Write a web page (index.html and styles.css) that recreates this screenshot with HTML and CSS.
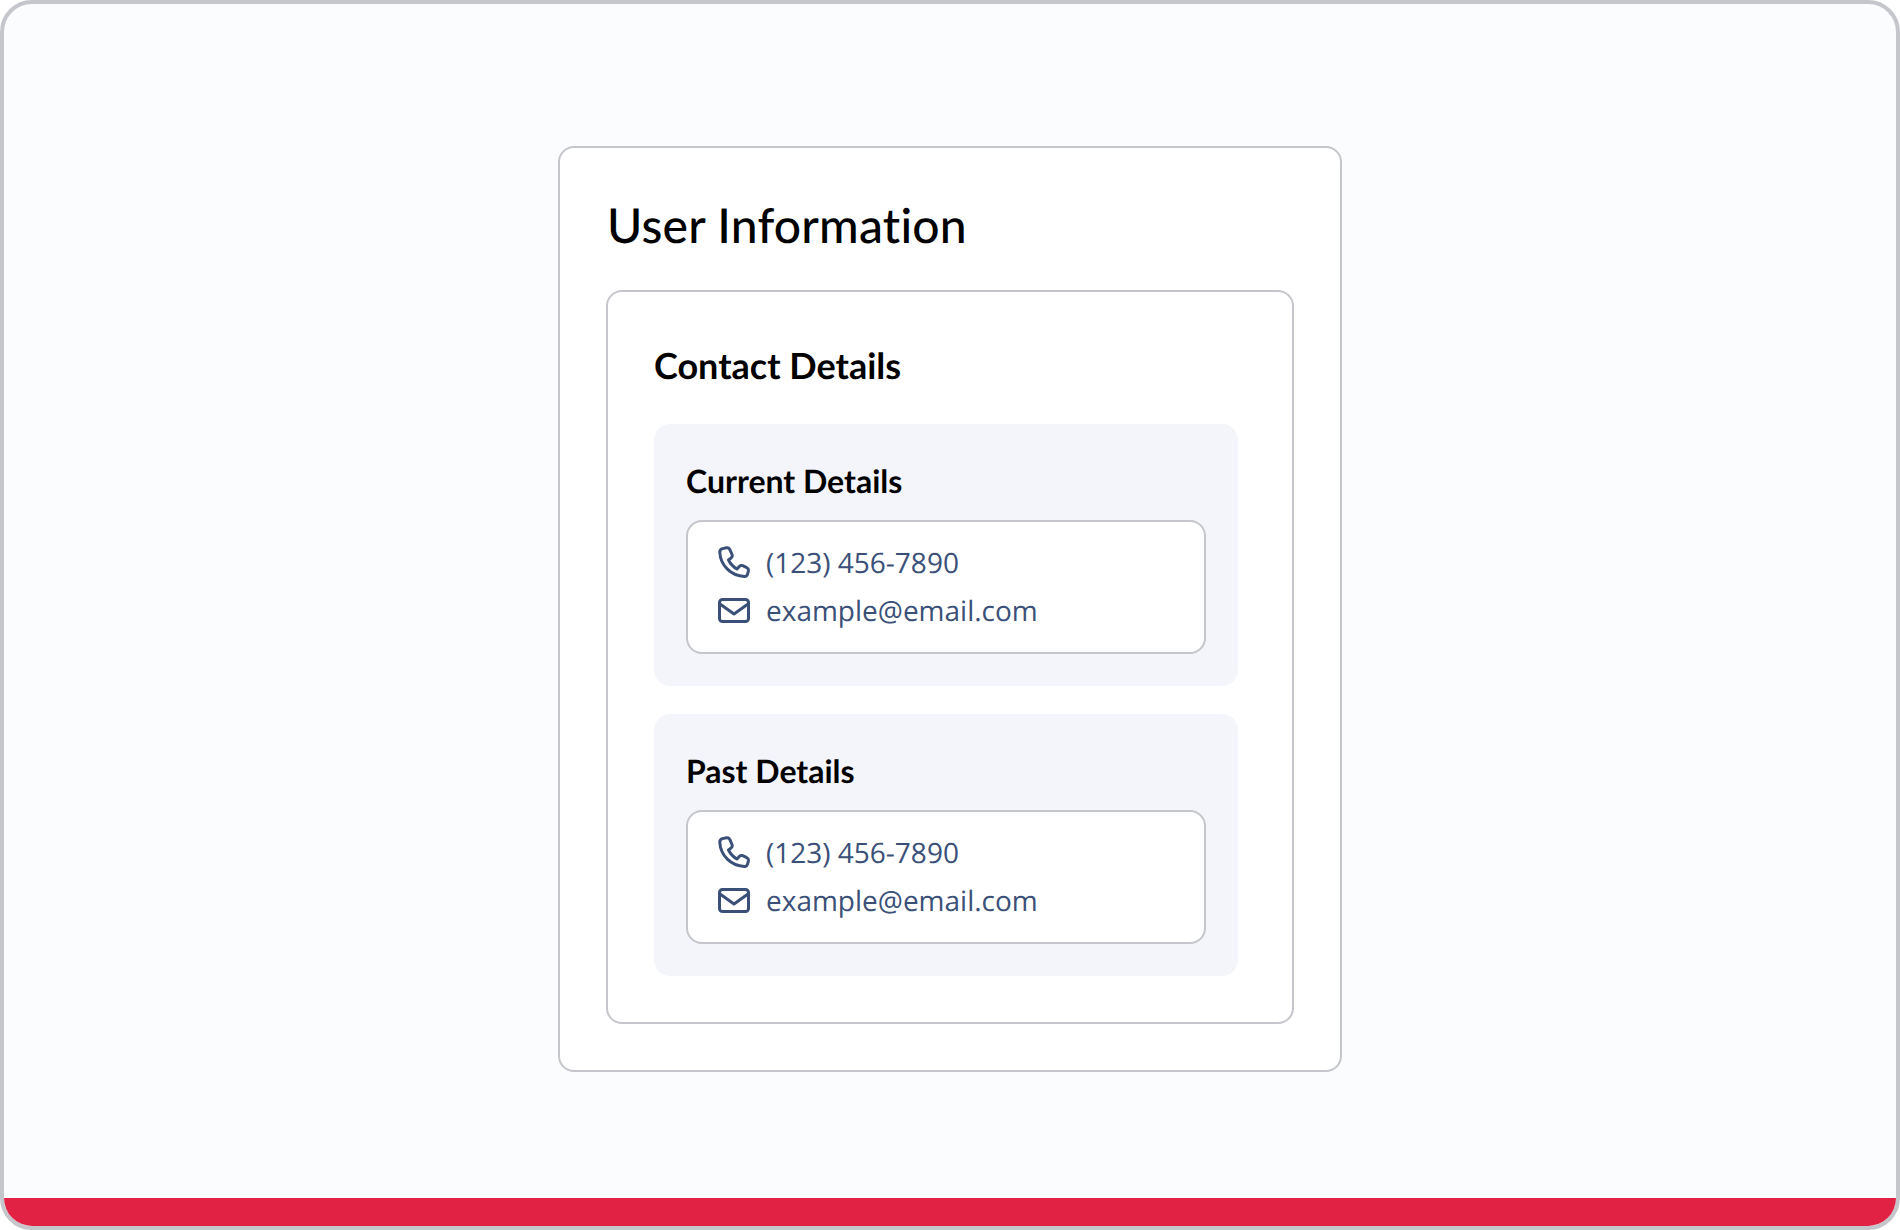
FILE: index.html
```html
<!DOCTYPE html>
<html lang="en">
	<head>
		<meta charset="UTF-8">
		<meta name="viewport" content="width=device-width, initial-scale=1.0">
		<title>User Information</title>
		<link rel="stylesheet" href="styles.css">
	</head>

	<body>
		<div class="frame">
			<main class="content">
				<section class="card">
					<h1>User Information</h1>

					<div class="contact">
						<h2>Contact Details</h2>

						<div class="details">
							<h3>Current Details</h3>
							<div class="info">
								<div class="info-row">
									<svg class="icon" viewBox="0 0 32 32"><path d="M1.800 6.500Q1.600 3.200 4.500 2.600L8.500 1.800Q11 1.500 12 3.800L14 8.500Q14.800 10.500 13.200 11.800L10.500 14Q13.500 20 19 23L21.500 20.300Q22.800 19 24.700 19.700L28.800 21.700Q30.800 22.800 30.400 24.800L29.600 28Q29 30.500 26.500 30.500C13 30 2.600 19.500 1.800 6.500Z"/></svg>
									<span>(123) 456-7890</span>
								</div>
								<div class="info-row">
									<svg class="icon" viewBox="0 0 32 32"><rect x="1.500" y="5.500" width="29" height="22" rx="3"/><path d="M2 10 16 20 30 10"/></svg>
									<span>example@email.com</span>
								</div>
							</div>
						</div>

						<div class="details">
							<h3>Past Details</h3>
							<div class="info">
								<div class="info-row">
									<svg class="icon" viewBox="0 0 32 32"><path d="M1.800 6.500Q1.600 3.200 4.500 2.600L8.500 1.800Q11 1.500 12 3.800L14 8.500Q14.800 10.500 13.200 11.800L10.500 14Q13.500 20 19 23L21.500 20.300Q22.800 19 24.700 19.700L28.800 21.700Q30.800 22.800 30.400 24.800L29.600 28Q29 30.500 26.500 30.500C13 30 2.600 19.500 1.800 6.500Z"/></svg>
									<span>(123) 456-7890</span>
								</div>
								<div class="info-row">
									<svg class="icon" viewBox="0 0 32 32"><rect x="1.500" y="5.500" width="29" height="22" rx="3"/><path d="M2 10 16 20 30 10"/></svg>
									<span>example@email.com</span>
								</div>
							</div>
						</div>
					</div>
				</section>
			</main>
			<div class="red-bar"></div>
		</div>
	</body>
</html>
```

FILE: styles.css
```css
* {
	box-sizing: border-box;
}

body {
	margin: 0;
	font-family: 'Open Sans', sans-serif;
	text-rendering: geometricPrecision;
	color: #000;
	background-color: #fff;
}

.frame {
	height: 1230px;
	display: flex;
	flex-direction: column;
	border: 4px solid #c5c6cc;
	border-radius: 32px;
	background-color: #fbfcfe;
	overflow: hidden;
}

.content {
	flex: 1;
	display: flex;
	justify-content: center;
	padding-top: 142px;
}

.red-bar {
	height: 28px;
	background-color: #e22245;
}

.card {
	width: 784px;
	height: 926px;
	padding: 48px 46px;
	background-color: #fff;
	border: 2px solid #c5c6cc;
	border-radius: 16px;
}

h1, h2, h3 {
	margin: 0;
	font-family: 'Lato', sans-serif;
	font-variant-ligatures: none;
	color: #000;
}

h1 {
	font-size: 48px;
	line-height: 60px;
	font-weight: 500;
	letter-spacing: 0.2px;
	padding-left: 1px;
	margin-bottom: 34px;
}

h2 {
	font-size: 36px;
	line-height: 44px;
	font-weight: 700;
	margin-bottom: 37px;
}

h3 {
	font-size: 32px;
	line-height: 40px;
	font-weight: 700;
	margin-bottom: 19px;
}

.contact {
	width: 688px;
	height: 734px;
	padding: 51px 46px 46px;
	border: 2px solid #c5c6cc;
	border-radius: 16px;
}

.details {
	width: 584px;
	height: 262px;
	padding: 37px 32px 32px;
	background-color: #f4f5fa;
	border-radius: 16px;
}

.details + .details {
	margin-top: 28px;
}

.info {
	width: 520px;
	height: 134px;
	padding: 20px 30px;
	display: flex;
	flex-direction: column;
	gap: 8px;
	background-color: #fff;
	border: 2px solid #c5c6cc;
	border-radius: 16px;
}

.info-row {
	display: flex;
	align-items: center;
	gap: 16px;
	height: 40px;
	font-size: 28px;
	color: #3a5078;
}

.info-row span {
	padding-top: 2px;
}

.icon {
	width: 32px;
	height: 32px;
	flex-shrink: 0;
	fill: none;
	stroke: #3a5078;
	stroke-width: 3;
	stroke-linecap: round;
	stroke-linejoin: round;
}
```
